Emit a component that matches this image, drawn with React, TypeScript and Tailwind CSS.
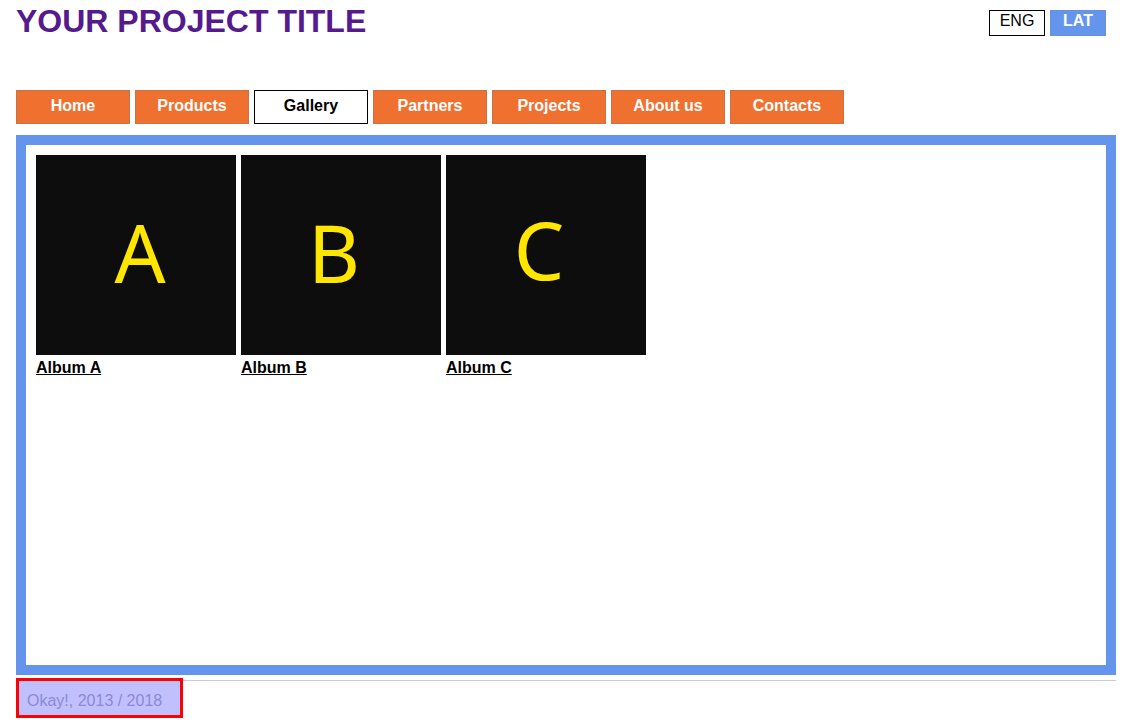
export default function App() {
  const nav = ['Home', 'Products', 'Gallery', 'Partners', 'Projects', 'About us', 'Contacts']
  const albums = [
    { letter: 'A', name: 'Album A', pos: 'pl-[8px] pb-[6px]' },
    { letter: 'B', name: 'Album B', pos: 'pr-[14px] pb-[6px]' },
    { letter: 'C', name: 'Album C', pos: 'pr-[14px] pb-[13px]' },
  ]

  return (
    <div className="min-h-screen bg-white font-['Liberation_Sans',Arial,sans-serif] text-black">
      <header className="flex items-start justify-between pl-[16px] pr-[34px]">
        <h1 className="mt-[3px] text-[32px] leading-[37px] font-bold text-[#551a8b]">YOUR PROJECT TITLE</h1>
        <div className="mt-[10px] flex gap-[5px]">
          <a className="w-[56px] h-[26px] border border-black bg-white text-center text-base leading-[20px]">ENG</a>
          <a className="w-[56px] h-[26px] border border-[#6a90dc] bg-[#6495ed] text-center text-base leading-[20px] font-bold text-white">LAT</a>
        </div>
      </header>

      <nav className="mt-[50px] ml-[16px] flex gap-[5px]">
        {nav.map((item) =>
          item === 'Gallery' ? (
            <a key={item} className="w-[114px] h-[34px] border border-black bg-white text-center text-base font-bold leading-[29px] text-black">
              {item}
            </a>
          ) : (
            <a key={item} className="w-[114px] h-[34px] border border-[#c47448] bg-[#f07030] text-center text-base font-bold leading-[29px] text-white">
              {item}
            </a>
          )
        )}
      </nav>

      <main className="mt-[11px] ml-[16px] w-[1100px] h-[540px] border-[10px] border-[#6495ed] p-[10px]">
        <div className="flex gap-[5px]">
          {albums.map((a) => (
            <div key={a.letter} className="w-[200px]">
              <div className={`w-[200px] h-[200px] bg-[#0d0d0d] flex items-center justify-center ${a.pos}`}>
                <span className="font-['Noto_Sans',sans-serif] text-[80px] leading-none text-[#ffe600]">{a.letter}</span>
              </div>
              <a className="block pt-[4px] text-base leading-[18px] font-bold underline text-black">{a.name}</a>
            </div>
          ))}
        </div>
      </main>

      <footer className="mt-[5px] ml-[16px] w-[1100px] border-t border-[#cccccc]">
        <div className="ml-[3px] w-[161px] h-[34px] pl-[8px] pt-[11px] leading-[18px] text-base bg-[#c0c0ff] text-[#8a8ad2] outline-[3px] outline-solid outline-[#ff0000]">
          Okay!, 2013 / 2018
        </div>
      </footer>
    </div>
  )
}
